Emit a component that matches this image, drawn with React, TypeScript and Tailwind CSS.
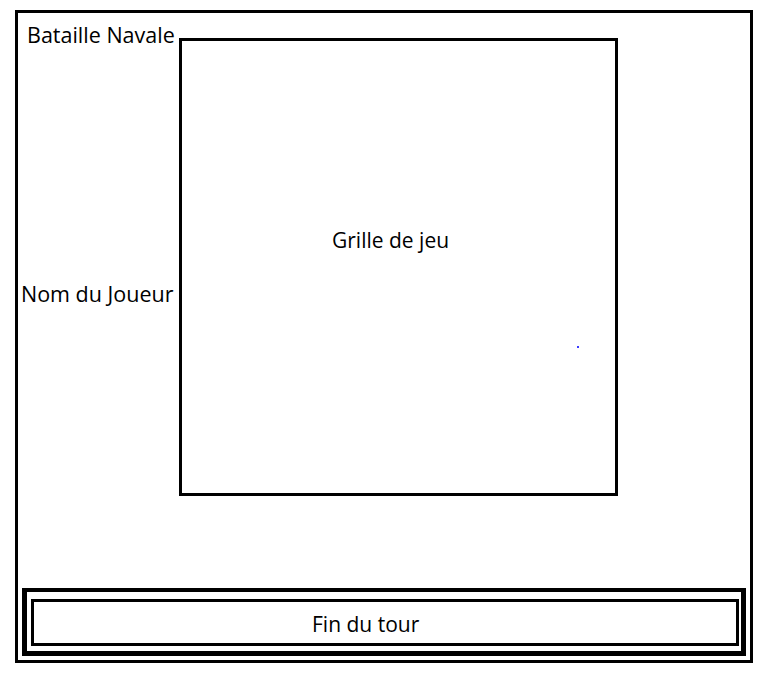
import React from "react";

export default function App() {
  const font = { fontFamily: '"Open Sans", "Noto Sans", sans-serif' };
  return (
    <div className="w-[762px] h-[673px] bg-white pt-[10px] pl-[15px] text-black" style={font}>
      <div className="w-[738px] h-[653px] border-[3px] border-black flex flex-col">
        <div className="flex flex-row h-[575px]">
          <div className="w-[161px] shrink-0 flex flex-col">
            <div className="mt-[8px] pl-[9px] text-[21.5px] leading-[28px] whitespace-nowrap">Bataille Navale</div>
            <div className="mt-[231px] pl-[3px] text-[21.5px] leading-[28px] whitespace-nowrap">Nom du Joueur</div>
          </div>
          <div className="mt-[25px] w-[439px] h-[458px] border-[3px] border-black relative">
            <div className="pt-[185px] pl-[150px] text-[21px] leading-[28px] whitespace-nowrap">Grille de jeu</div>
            <div className="absolute left-[395px] top-[305px] w-[2px] h-[2px] bg-[#3a3aff]" />
          </div>
        </div>
        <div className="ml-[4px] mr-[4px] mt-auto mb-[4px] h-[68px] border-x-[5px] border-b-[5px] border-t-4 border-black flex flex-col">
          <div className="ml-[4px] mr-[2px] mt-[7px] h-[47px] border-[3px] border-black">
            <div className="pt-[8px] pl-[278px] text-[21px] leading-[28px] whitespace-nowrap">Fin du tour</div>
          </div>
        </div>
      </div>
    </div>
  );
}
